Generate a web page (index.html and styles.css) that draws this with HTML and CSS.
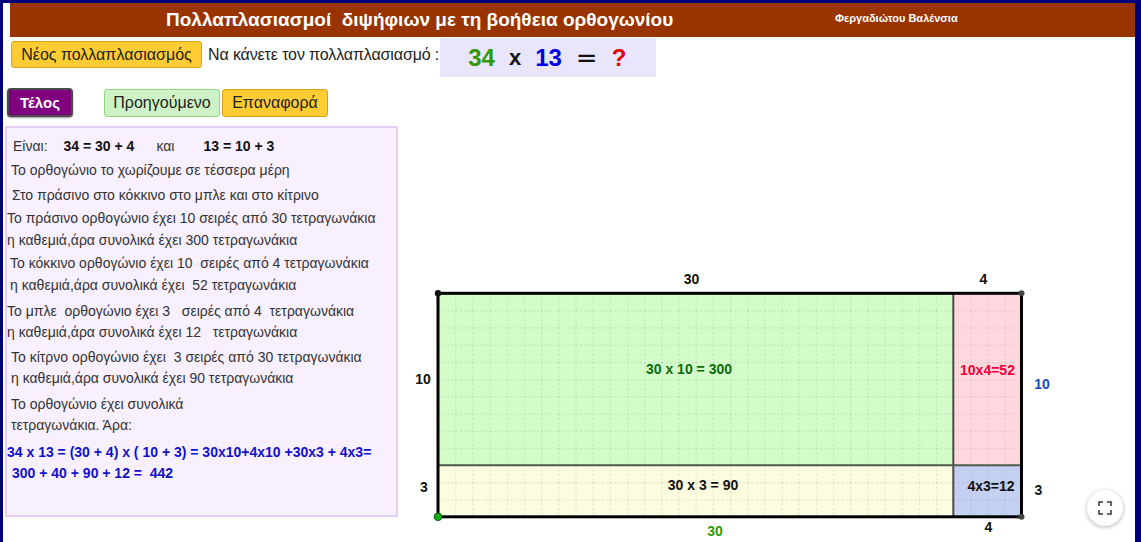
FILE: index.html
```html
<!DOCTYPE html>
<html lang="el">
<head>
<meta charset="utf-8">
<title>Πολλαπλασιασμοί διψήφιων</title>
<link rel="stylesheet" href="styles.css">
</head>
<body>
<div class="frame">
  <header class="topbar">
    <h1 class="title">Πολλαπλασιασμοί&nbsp; διψήφιων με τη βοήθεια ορθογωνίου</h1>
    <span class="author">Φεργαδιώτου Βαλένσια</span>
  </header>

  <div class="row task">
    <button class="btn btn-yellow btn-new">Νέος πολλαπλασιασμός</button>
    <span class="prompt">Να κάνετε τον πολλαπλασιασμό :</span>
    <div class="equation">
      <span class="n1">34</span>
      <span class="op">x</span>
      <span class="n2">13</span>
      <span class="op eq">=</span>
      <span class="q">?</span>
    </div>
  </div>

  <div class="row controls">
    <button class="btn btn-end">Τέλος</button>
    <button class="btn btn-green btn-prev">Προηγούμενο</button>
    <button class="btn btn-yellow btn-reset">Επαναφορά</button>
  </div>

  <main class="workspace">
    <section class="explain">
      <div class="line first ind6">Είναι:<b class="g1">34 = 30 + 4</b><span class="g2">και</span><b class="g3">13 = 10 + 3</b></div>
      <div class="line m2 ind4">Το ορθογώνιο το χωρίζουμε σε τέσσερα μέρη</div>
      <div class="line m3 ind5">Στο πράσινο στο κόκκινο στο μπλε και στο κίτρινο</div>
      <div class="pair m1 ind0">
        <div class="line">Το πράσινο ορθογώνιο έχει 10 σειρές από 30 τετραγωνάκια</div>
        <div class="line">η καθεμιά,άρα συνολικά έχει 300 τετραγωνάκια</div>
      </div>
      <div class="pair m1 ind3">
        <div class="line">Το κόκκινο ορθογώνιο έχει 10&nbsp; σειρές από 4 τετραγωνάκια</div>
        <div class="line">η καθεμιά,άρα συνολικά έχει&nbsp; 52 τετραγωνάκια</div>
      </div>
      <div class="pair m4 ind0 tight">
        <div class="line">Το μπλε&nbsp; ορθογώνιο έχει 3 &nbsp; σειρές από 4&nbsp; τετραγωνάκια</div>
        <div class="line">η καθεμιά,άρα συνολικά έχει 12 &nbsp; τετραγωνάκια</div>
      </div>
      <div class="pair m3 ind4 tight">
        <div class="line">Το κίτρνο ορθογώνιο έχει&nbsp; 3 σειρές από 30 τετραγωνάκια</div>
        <div class="line">η καθεμιά,άρα συνολικά έχει 90 τετραγωνάκια</div>
      </div>
      <div class="pair m4 ind4 tight">
        <div class="line">Το ορθογώνιο έχει συνολικά</div>
        <div class="line">τετραγωνάκια. Άρα:</div>
      </div>
      <div class="pair m5 result tight">
        <div class="line">34 x 13 = (30 + 4) x ( 10 + 3) = 30x10+4x10 +30x3 + 4x3=</div>
        <div class="line ind5">300 + 40 + 90 + 12 =&nbsp; 442</div>
      </div>
    </section>

    <div class="board-wrap">
      <svg class="board" width="736" height="425" viewBox="398 117 736 425" xmlns="http://www.w3.org/2000/svg">
        <defs>
          <pattern id="grid" x="438" y="293" width="17.17" height="17.2" patternUnits="userSpaceOnUse">
            <path d="M0 0.5 H17.17" stroke="#7a7a7a" stroke-opacity="0.22" stroke-width="1.4" stroke-dasharray="2 2.5"/>
            <path d="M0.5 0 V17.2" stroke="#7a7a7a" stroke-opacity="0.22" stroke-width="1.4" stroke-dasharray="2 2.5"/>
          </pattern>
        </defs>
        <rect x="438" y="293" width="515" height="172" fill="#d4fcc9"/>
        <rect x="953" y="293" width="68" height="172" fill="#ffd8df"/>
        <rect x="438" y="465" width="515" height="52" fill="#fdfcdf"/>
        <rect x="953" y="465" width="68" height="52" fill="#c4d0f2"/>
        <rect x="438" y="293" width="583" height="224" fill="url(#grid)"/>
        <line x1="953.3" y1="293" x2="953.3" y2="517" stroke="#4a4a4a" stroke-width="2"/>
        <line x1="438" y1="465.2" x2="1021" y2="465.2" stroke="#4e5a4e" stroke-width="2"/>
        <rect x="438" y="293.3" width="583.5" height="223.5" fill="none" stroke="#000" stroke-width="3"/>
        <circle cx="438" cy="293.3" r="3.2" fill="#111"/>
        <circle cx="1021.5" cy="293.3" r="3" fill="#444"/>
        <circle cx="1021.5" cy="516.8" r="3" fill="#444"/>
        <circle cx="438" cy="516.8" r="3.8" fill="#10b010" stroke="#056005" stroke-width="1"/>

        <g class="lbl">
          <text x="691.5" y="284">30</text>
          <text x="983.5" y="284">4</text>
          <text x="423" y="384">10</text>
          <text x="424" y="492">3</text>
          <text x="1038.5" y="495">3</text>
          <text x="988.5" y="532">4</text>
          <text x="1042" y="389" class="blue">10</text>
          <text x="715" y="536" class="lgreen">30</text>
          <text x="689" y="374" class="dgreen">30 x 10 = 300</text>
          <text x="987.5" y="375" class="red">10x4=52</text>
          <text x="703" y="490">30 x 3 = 90</text>
          <text x="991" y="491">4x3=12</text>
        </g>
      </svg>
      <button class="fullscreen" aria-label="Πλήρης οθόνη">
        <svg width="14" height="14" viewBox="0 0 14 14">
          <path d="M1 5V1H5M9 1H13V5M13 9V13H9M5 13H1V9" fill="none" stroke="#666" stroke-width="2"/>
        </svg>
      </button>
    </div>
  </main>
</div>
</body>
</html>
```

FILE: styles.css
```css
* { box-sizing: border-box; }
html, body { margin: 0; padding: 0; background: #fff; }
body {
  width: 1141px;
  height: 542px;
  overflow: hidden;
  font-family: "Liberation Sans", Arial, sans-serif;
}
.frame {
  width: 1141px;
  height: 560px;
  border-top: 3px solid #00007a;
  border-left: 3px solid #00007a;
  border-right: 6px solid #00007a;
}

/* header */
.topbar {
  margin-left: 7px;
  height: 34px;
  background: #993300;
  color: #fff;
  display: flex;
  align-items: center;
}
.title {
  margin: 0 0 0 156px;
  width: 669px;
  font-size: 19px;
  font-weight: bold;
  white-space: nowrap;
  line-height: 22px;
}
.author {
  align-self: flex-start;
  margin-top: 9px;
  font-size: 11px;
  font-weight: bold;
  line-height: 12px;
  white-space: nowrap;
}

/* rows */
.row { display: flex; align-items: flex-start; }
.task { margin-top: 1px; height: 40px; }
.controls { margin-top: 10px; height: 29px; }

.btn {
  font-family: "Liberation Sans", Arial, sans-serif;
  font-size: 16px;
  color: #222;
  padding: 0;
  border-radius: 3px;
  cursor: pointer;
}
.btn-yellow { background: #ffcc33; border: 1px solid #d9a21a; }
.btn-green { background: #cdf2c5; border: 1px solid #97d887; }
.btn-new { margin: 3px 0 0 8px; width: 191px; height: 27px; }
.prompt {
  margin: 3px 0 0 6px;
  line-height: 27px;
  font-size: 16px;
  letter-spacing: -0.12px;
  color: #222;
  white-space: nowrap;
}
.equation {
  margin-left: 1px;
  width: 216px;
  height: 39px;
  background: #e9e6fb;
  display: flex;
  align-items: center;
  padding-left: 28px;
  gap: 14px;
  font-family: "Liberation Sans", Arial, sans-serif;
  font-size: 24px;
  font-weight: bold;
}
.equation .n1 { color: #339900; }
.equation .n2 { color: #0000ee; }
.equation .op { color: #111; font-size: 22px; }
.equation .eq { font-family: "DejaVu Sans", sans-serif; font-weight: normal; font-size: 26px; }
.equation .q { color: #ee0000; }

.btn-end {
  margin-left: 4px;
  width: 66px;
  height: 29px;
  background: #800080;
  border: 2px solid #4a4a4a;
  border-radius: 4px;
  color: #fff;
  font-size: 15px;
  font-weight: bold;
  box-shadow: 0 1px 2px rgba(0,0,0,.4);
}
.btn-prev { margin: 1px 0 0 31px; width: 116px; height: 28px; }
.btn-reset { margin: 1px 0 0 2px; width: 106px; height: 28px; }

/* workspace */
.workspace {
  position: relative;
  display: flex;
  align-items: flex-start;
}
.explain {
  margin: 9px 0 0 2px;
  width: 393px;
  height: 391px;
  background: #f8f0fe;
  border: 2px solid #e6cff7;
  padding-top: 7px;
  font-size: 14px;
  color: #333;
}
.line { line-height: 22px; white-space: nowrap; }
.pair.tight .line + .line { margin-top: -1px; }
.m1 { margin-top: 1px; }
.m2 { margin-top: 2px; }
.m3 { margin-top: 3px; }
.m4 { margin-top: 4px; }
.m5 { margin-top: 5px; }
.ind0 { padding-left: 0; }
.ind3 { padding-left: 3px; }
.ind4 { padding-left: 4px; }
.ind5 { padding-left: 5px; }
.ind6 { padding-left: 6px; }
.g1 { margin-left: 16px; color: #111; }
.g2 { margin-left: 22px; }
.g3 { margin-left: 29px; color: #111; }
.result { color: #1111cc; font-weight: bold; }

.board-wrap { position: relative; width: 736px; height: 425px; }
.board { display: block; }
.lbl text {
  font-family: "Liberation Sans", Arial, sans-serif;
  font-size: 14px;
  font-weight: bold;
  fill: #111;
  text-anchor: middle;
}
.lbl .blue { fill: #1a47c8; }
.lbl .lgreen { fill: #339900; }
.lbl .dgreen { fill: #0b6b0b; }
.lbl .red { fill: #f0003c; }

.fullscreen {
  position: absolute;
  left: 689px;
  top: 373px;
  width: 36px;
  height: 36px;
  border-radius: 50%;
  border: none;
  background: #fff;
  box-shadow: 0 1px 4px rgba(0,0,0,.3);
  display: flex;
  align-items: center;
  justify-content: center;
  padding: 0;
}
```
